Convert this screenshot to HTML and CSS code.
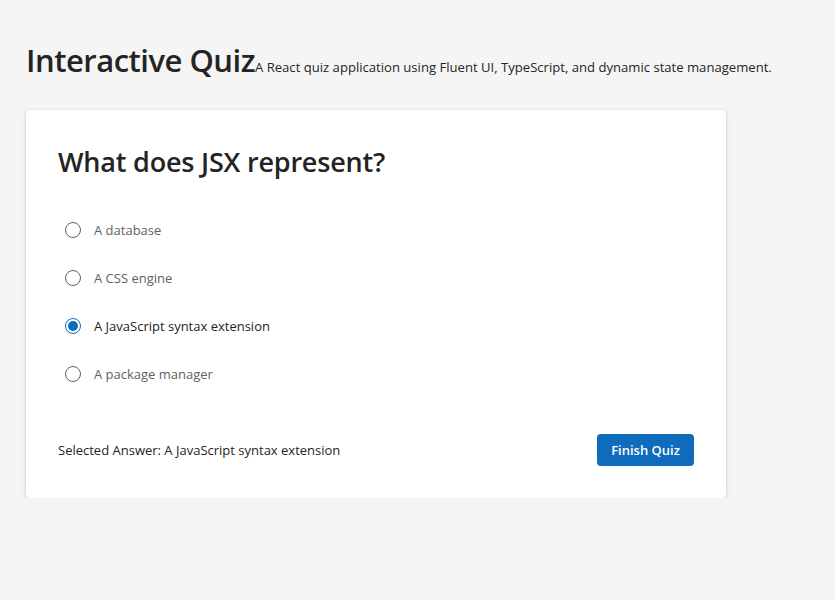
FILE: index.html
```html
<!DOCTYPE html>
<html lang="en">
<head>
<meta charset="utf-8">
<title>Interactive Quiz</title>
<link rel="stylesheet" href="styles.css">
</head>
<body>
<div class="page">
  <header class="header">
    <h1 class="title">Interactive Quiz</h1>
    <span class="subtitle">A React quiz application using Fluent UI, TypeScript, and dynamic state management.</span>
  </header>
  <section class="card">
    <h2 class="question">What does JSX represent?</h2>
    <div class="options">
      <label class="option"><span class="radio"></span><span class="label">A database</span></label>
      <label class="option"><span class="radio"></span><span class="label">A CSS engine</span></label>
      <label class="option checked"><span class="radio"></span><span class="label">A JavaScript syntax extension</span></label>
      <label class="option"><span class="radio"></span><span class="label">A package manager</span></label>
    </div>
    <div class="footer">
      <span class="selected">Selected Answer: A JavaScript syntax extension</span>
      <button class="btn">Finish Quiz</button>
    </div>
  </section>
</div>
</body>
</html>
```
FILE: styles.css
```css
html, body {
  margin: 0;
  padding: 0;
}
body {
  background: #f5f5f5;
  font-family: "Open Sans", "Noto Sans", sans-serif;
  color: #242424;
}
.page {
  padding: 40px 26px 0 26px;
}
.header {
  display: flex;
  align-items: baseline;
}
.title {
  margin: 0;
  font-size: 31px;
  line-height: 40px;
  font-weight: 600;
  letter-spacing: -0.5px;
  color: #242424;
}
.subtitle {
  font-size: 13.1px;
  letter-spacing: 0;
  color: #242424;
}
.card {
  margin-top: 30px;
  width: 700px;
  box-sizing: border-box;
  background: #fff;
  border-radius: 4px;
  padding: 32px;
  box-shadow: 0 0 2px rgba(0,0,0,0.12), 0 2px 4px rgba(0,0,0,0.14);
}
.question {
  margin: 0;
  font-size: 27px;
  line-height: 40px;
  font-weight: 600;
  letter-spacing: -0.2px;
  color: #242424;
}
.options {
  margin-top: 24px;
  display: flex;
  flex-direction: column;
}
.option {
  display: flex;
  align-items: center;
  height: 48px;
  padding-left: 7px;
  font-size: 13px;
  color: #616161;
}
.radio {
  width: 16px;
  height: 16px;
  box-sizing: border-box;
  border: 1px solid #616161;
  border-radius: 50%;
  display: flex;
  align-items: center;
  justify-content: center;
  flex-shrink: 0;
}
.label {
  margin-left: 13px;
}
.option.checked {
  color: #242424;
}
.option.checked .radio {
  border-color: #0f6cbd;
}
.option.checked .radio::after {
  content: "";
  width: 10px;
  height: 10px;
  border-radius: 50%;
  background: #0f6cbd;
}
.footer {
  margin-top: 36px;
  display: flex;
  align-items: center;
  justify-content: space-between;
}
.selected {
  font-size: 13px;
  color: #242424;
}
.btn {
  height: 32px;
  width: 97px;
  border: none;
  border-radius: 4px;
  background: #0f6cbd;
  color: #fff;
  font-family: inherit;
  font-size: 13px;
  font-weight: 600;
  padding: 0 12px;
}
```
